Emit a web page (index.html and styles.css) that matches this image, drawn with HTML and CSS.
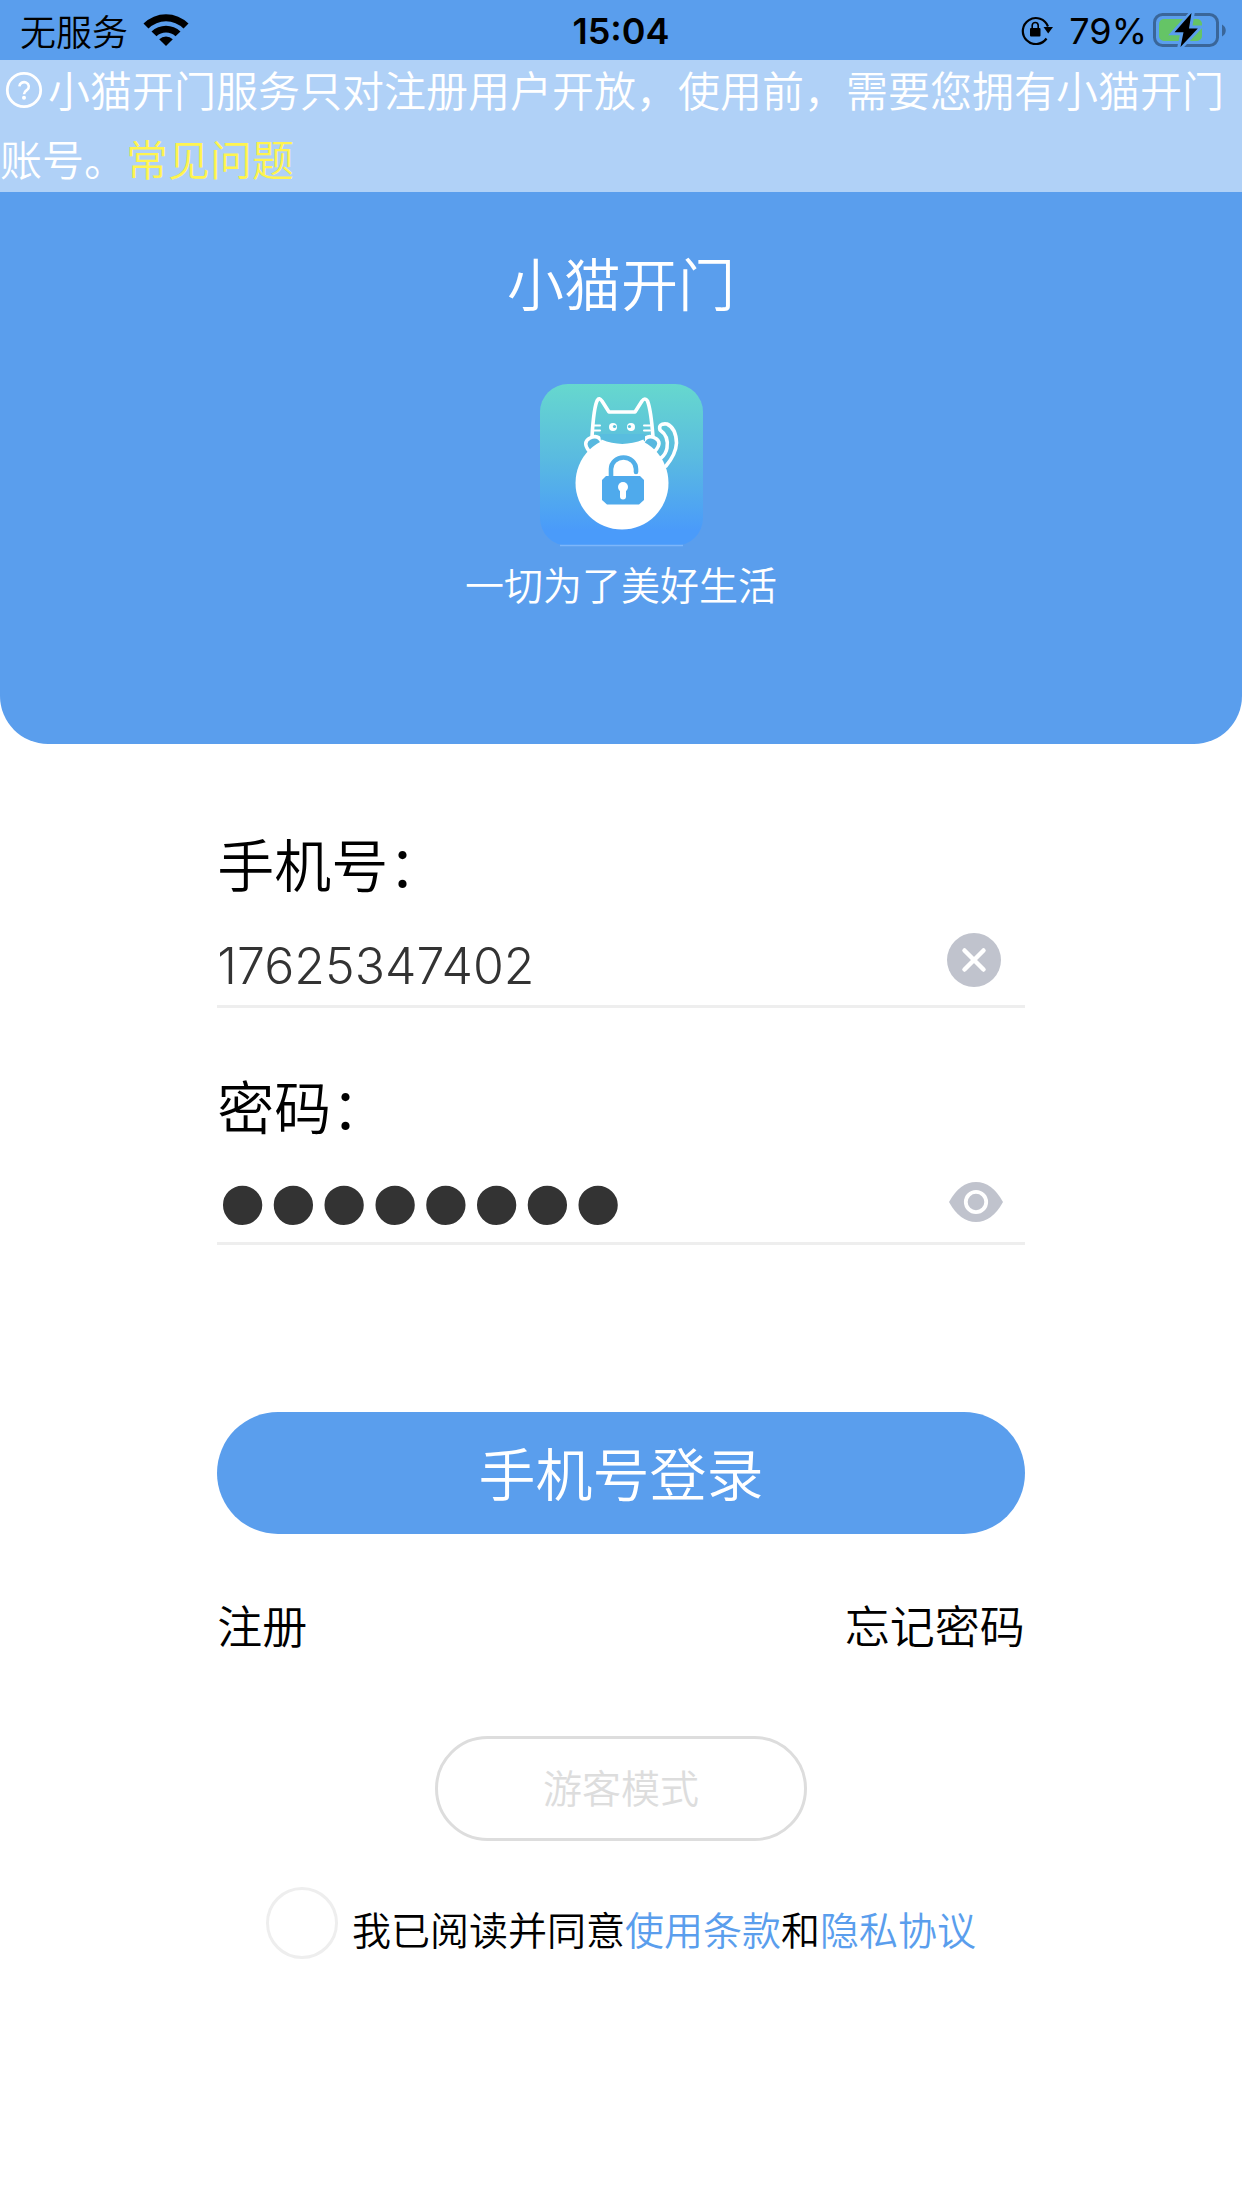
FILE: index.html
```html
<!DOCTYPE html>
<html lang="zh-CN">
<head>
<meta charset="utf-8">
<meta name="viewport" content="width=device-width, initial-scale=1">
<title>小猫开门</title>
<link rel="stylesheet" href="styles.css">
</head>
<body>
<header class="hero">
  <div class="status">
    <div class="status-left">
      <span>无服务</span>
      <svg class="wifi" viewBox="0 0 46 34" aria-hidden="true">
        <path d="M0.500 10.500A32 32 0 0 1 45.500 10.500L40.500 15.500A25 25 0 0 0 5.500 15.500Z"/>
        <path d="M8.500 18.500A21 21 0 0 1 37.500 18.500L32.500 23.300A14 14 0 0 0 13.500 23.300Z"/>
        <path d="M16.200 26.200A10 10 0 0 1 29.800 26.200L23 33Z"/>
      </svg>
    </div>
    <time class="clock">15:04</time>
    <div class="status-right">
      <svg class="rotation" viewBox="0 0 32 30" aria-hidden="true">
        <path d="M25.500 23.500A13 13 0 1 1 27 11.500" fill="none" stroke="#000" stroke-width="2.200"/>
        <path d="M22.500 12H32L27.200 18.500Z"/>
        <rect x="9" y="13" width="10.500" height="8.500" rx="1"/>
        <path d="M11.200 13.500V10.500a3 3 0 0 1 6 0V13.500" fill="none" stroke="#000" stroke-width="1.600"/>
      </svg>
      <span>79%</span>
      <svg class="battery" viewBox="0 0 74 36" aria-hidden="true">
        <rect x="1.500" y="2.500" width="63" height="31" rx="8" fill="none" stroke="#3a6699" stroke-width="3"/>
        <path d="M69 12.500C74 15 74 22 69 24.500Z" fill="#3a6699"/>
        <rect x="6" y="7" width="43" height="22" rx="5" fill="#65c466"/>
        <path d="M38.500 2L22 20.200H30.500L27.500 34.500L44.500 16.500H36Z" stroke="#5a9eed" stroke-width="6" fill="#5a9eed"/>
        <path d="M38.500 1L21.500 20.200H30.500L27.500 35L44.800 16.500H36Z"/>
      </svg>
    </div>
  </div>
  <p class="notice"><svg class="help" viewBox="0 0 48 42" aria-hidden="true"><g fill="none" stroke="#fff" stroke-width="2.800"><circle cx="24" cy="21" r="16.700"/><path d="M19.400 17.400a4.700 4.400 0 1 1 7.600 3.600c-2 1.400-3 2-3 4.300" stroke-width="2.600"/></g><circle cx="24" cy="28.800" r="2" fill="#fff"/></svg>小猫开门服务只对注册用户开放，使用前，需要您拥有小猫开门账号。<a class="faq" href="#faq">常见问题</a></p>
  <h1 class="title">小猫开门</h1>
  <svg class="logo" viewBox="0 0 163 163" role="img" aria-label="小猫开门">
    <defs>
      <linearGradient id="sky" x1="0" y1="0" x2="0" y2="1">
        <stop offset="0" stop-color="#66d8ce"/><stop offset="0.450" stop-color="#5abbe0"/><stop offset="0.900" stop-color="#4a9bfa"/>
      </linearGradient>
    </defs>
    <rect width="163" height="162" rx="28" fill="url(#sky)"/>
    <path d="M20 161.500H143" stroke="#7db6fa" stroke-width="1.500"/>
    <g fill="none" stroke="#fff" stroke-width="3.600" stroke-linecap="round" stroke-linejoin="round">
      <path d="M52 53C53 36 54 22 57.500 16Q59 13 62 17L69 28H95L102 17Q105 13 107.500 17C111 26 112 40 113 53"/>
      <path d="M126 82Q136 70 136.500 59Q136 44 127 40Q118 39 120 46Q129 52 127 64Q126 70 121 74"/>
      <path d="M49 67Q42 58 50 54Q58 50 62 58M115 67Q123 58 115 54Q107 50 103 58" fill="#58b8df"/>
      <path d="M54 41.500H60M54 46.500H60M104 41.500H110M104 46.500H110" stroke-width="2"/>
    </g>
    <circle cx="82" cy="99" r="46.500" fill="#fff"/>
    <path d="M60 50H105V57Q82 65 61 57Z" fill="#59bddf"/>
    <path d="M61 57Q82 66 104 57" fill="none" stroke="#fff" stroke-width="3"/>
    <circle cx="73" cy="43" r="4" fill="#fff"/><circle cx="91" cy="43" r="4" fill="#fff"/>
    <circle cx="74.500" cy="42.500" r="1.600" fill="#59c2dc"/><circle cx="89.500" cy="42.500" r="1.600" fill="#59c2dc"/>
    <path d="M71 94V85a12.500 11.500 0 0 1 25 0V88" fill="none" stroke="#52afe8" stroke-width="4.600" stroke-linecap="round"/>
    <path d="M66 92H100L104 96V116L99 120.500H67L62 116V96Z" fill="#4faaec"/>
    <circle cx="83" cy="103" r="5" fill="#fff"/><path d="M83 104V112.500" stroke="#fff" stroke-width="6" stroke-linecap="round"/>
  </svg>
  <p class="slogan">一切为了美好生活</p>
</header>
<main>
  <form class="login">
    <label class="label" for="phone">手机号：</label>
    <div class="field">
      <input class="input" id="phone" type="tel" value="17625347402">
      <button class="icon-button" type="button" aria-label="清除">
        <svg class="icon" viewBox="0 0 54 54"><circle cx="27" cy="27" r="27" fill="#c0c3cd"/><path d="M17.500 17.500L36.500 36.500M36.500 17.500L17.500 36.500" stroke="#fff" stroke-width="4.500" stroke-linecap="round"/></svg>
      </button>
    </div>
    <label class="label label-password" for="password">密码：</label>
    <div class="field field-password">
      <input class="input input-password" id="password" type="password" value="12345678">
      <button class="icon-button icon-button-eye" type="button" aria-label="显示密码">
        <svg class="icon" viewBox="0 0 54 54"><path d="M0 27Q11 7 27 7T54 27Q43 47 27 47T0 27Z" fill="#c0c3cd"/><circle cx="27" cy="27" r="10.200" fill="none" stroke="#fff" stroke-width="3.800"/></svg>
      </button>
    </div>
    <button class="submit" type="submit">手机号登录</button>
    <div class="links"><a class="link" href="#register">注册</a><a class="link" href="#forgot">忘记密码</a></div>
    <button class="guest" type="button">游客模式</button>
    <div class="agree">
      <input class="check" id="agree" type="checkbox">
      <p class="agree-text"><label for="agree">我已阅读并同意</label><a class="doc" href="#terms">使用条款</a>和<a class="doc" href="#privacy">隐私协议</a></p>
    </div>
  </form>
</main>
</body>
</html>
```
FILE: styles.css
```css
* {
  box-sizing: border-box;
}

body {
  margin: 0;
  background: #fff;
  color: #000;
  font-family: Inter, "Noto Sans CJK SC", sans-serif;
  font-size: 39px;
  font-weight: 350;
}

button,
input {
  margin: 0;
  padding: 0;
  border: 0;
  background: none;
  color: inherit;
  font: inherit;
}

a {
  color: inherit;
  text-decoration: none;
}

svg {
  display: block;
}

.hero {
  display: flex;
  flex-direction: column;
  align-items: center;
  padding-bottom: 130px;
  border-radius: 0 0 48px 48px;
  background: #5a9eed;
  color: #fff;
}

.status {
  display: grid;
  grid-template-columns: 1fr auto 1fr;
  align-items: center;
  align-self: stretch;
  height: 60px;
  padding: 0 15px;
  color: #000;
  font-size: 36px;
}

.status-left,
.status-right {
  display: flex;
  align-items: center;
}

.status-left {
  gap: 15px;
  padding-left: 5px;
}

.status-right {
  justify-content: flex-end;
  font-weight: 400;
}

.clock {
  padding-top: 2px;
  font-weight: 600;
}

.status-right span {
  padding-top: 2px;
}

.wifi {
  width: 46px;
  height: 34px;
}

.rotation {
  width: 32px;
  height: 30px;
  margin-right: 16px;
}

.battery {
  width: 74px;
  height: 36px;
  margin-left: 6px;
}

.notice {
  align-self: stretch;
  margin: 0;
  background: #b0d1f7;
  font-size: 42px;
  line-height: 63px;
}

.help {
  display: inline-block;
  width: 48px;
  height: 42px;
  margin-bottom: 18px;
  vertical-align: -22px;
}

.faq {
  color: #fff44f;
}

.title {
  margin: 54px 0 0;
  font-size: 57px;
  font-weight: inherit;
  line-height: 80px;
}

.logo {
  width: 163px;
  height: 163px;
  margin-top: 58px;
}

.slogan {
  margin: 11px 0 0;
  line-height: 56px;
}

.login {
  display: flex;
  flex-direction: column;
  width: 65%;
  margin: 0 auto;
  padding-top: 83px;
}

.label {
  font-size: 57px;
  line-height: 80px;
}

.label-password {
  margin-top: 61px;
}

.field {
  display: flex;
  align-items: flex-end;
  height: 101px;
  padding: 0 24px 3px 0;
  border-bottom: 3px solid #eee;
}

.field-password {
  height: 96px;
  padding-right: 22px;
}

.input {
  flex: 1;
  min-width: 0;
  height: 72px;
  outline: none;
  color: #333;
  font-size: 50px;
  font-weight: inherit;
}

.input-password {
  height: 60px;
  margin-bottom: 6px;
  font-family: "Liberation Sans", sans-serif;
  font-size: 145px;
  line-height: 60px;
}

.icon-button {
  margin-bottom: 15px;
  cursor: pointer;
}

.icon-button-eye {
  margin-bottom: 10px;
}

.icon {
  width: 54px;
  height: 54px;
}

.submit {
  height: 122px;
  margin-top: 167px;
  padding-bottom: 4px;
  border-radius: 61px;
  background: #5a9eed;
  color: #fff;
  font-size: 57px;
}

.links {
  display: flex;
  justify-content: space-between;
  margin-top: 61px;
  font-size: 45px;
  line-height: 66px;
}

.guest {
  align-self: center;
  width: 46%;
  height: 105px;
  margin-top: 75px;
  padding-bottom: 6px;
  border: 3px solid #ddd;
  border-radius: 53px;
  color: #ddd;
}

.agree {
  display: flex;
  align-items: center;
  align-self: center;
  gap: 14px;
  margin-top: 46px;
}

.check {
  width: 72px;
  height: 72px;
  border: 3px solid #eee;
  border-radius: 50%;
  appearance: none;
}

.agree-text {
  margin: 0;
  padding-top: 10px;
}

.doc {
  color: #5a9eed;
}
```
